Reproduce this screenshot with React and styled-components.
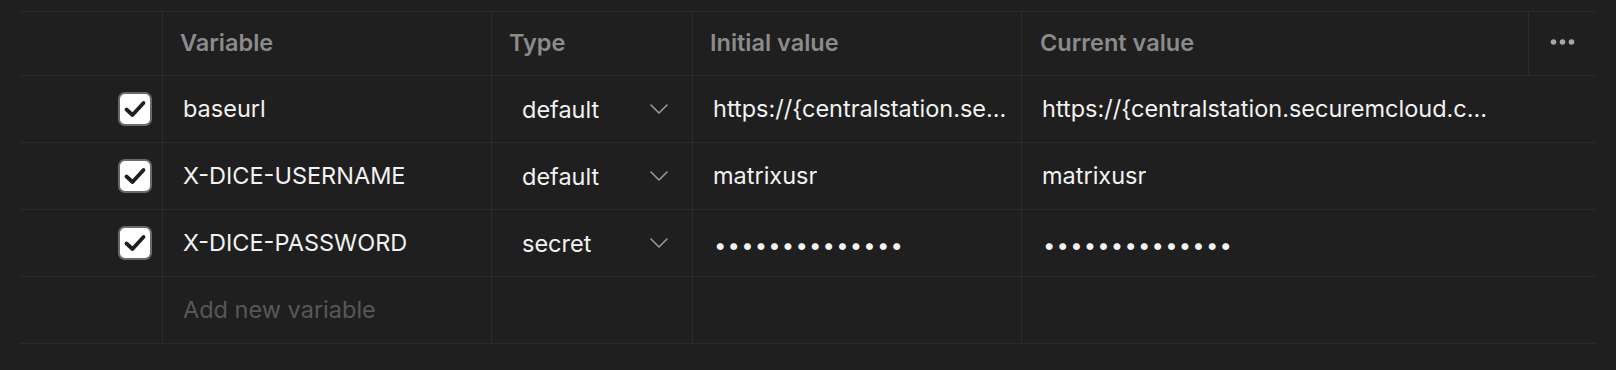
import React from "react";
import styled, { createGlobalStyle } from "styled-components";

const Global = createGlobalStyle`
  html, body { margin: 0; padding: 0; background: #1f1f1f; }
  body { font-family: Inter, "Noto Sans", sans-serif; -webkit-font-smoothing: antialiased; }
`;

const Page = styled.div`
  width: 1616px;
  height: 370px;
  box-sizing: border-box;
  padding: 11px 20px 0 20px;
  background: #1f1f1f;
`;

const Table = styled.div`
  width: 1576px;
  border-top: 1px solid #2b2b2b;
`;

const Row = styled.div`
  display: grid;
  grid-template-columns: ${(p) =>
    p.$header ? "143px 329px 201px 329px 507px 67px" : "143px 329px 201px 329px 574px"};
  height: ${(p) => (p.$header ? 63 : 66)}px;
  border-bottom: 1px solid #2b2b2b;
`;

const Cell = styled.div`
  display: flex;
  align-items: center;
  min-width: 0;
  box-sizing: border-box;
  padding: 0 ${(p) => p.$pr ?? 12}px ${(p) => p.$pb ?? 2}px ${(p) => p.$pl ?? 20}px;
  border-right: ${(p) => (p.$last ? "none" : "1px solid #2b2b2b")};
  justify-content: ${(p) => p.$justify || "flex-start"};
`;

const HeadText = styled.span`
  font-size: 23.5px;
  font-weight: 600;
  color: #8b8b8b;
  white-space: nowrap;
`;

const Text = styled.span`
  font-size: 23.5px;
  font-weight: 400;
  color: ${(p) => (p.$muted ? "#585858" : "#f2f2f2")};
  white-space: nowrap;
  overflow: hidden;
  text-overflow: ellipsis;
`;

const Dots = styled.span`
  font-size: 22px;
  color: #f4f4f4;
  letter-spacing: 1.2px;
  white-space: nowrap;
  padding: 6px 0 0 1px;
`;

const Box = styled.span`
  width: 34px;
  height: 34px;
  box-sizing: border-box;
  border-radius: 7px;
  border: 2px solid #6a6a6a;
  background: #ffffff;
  display: flex;
  align-items: center;
  justify-content: center;
`;

const SelectButton = styled.div`
  flex: 1;
  display: flex;
  align-items: center;
  justify-content: space-between;
  padding: 0 24px 0 10px;
  min-width: 0;
`;

const MoreButton = styled.div`
  display: flex;
  align-items: center;
  justify-content: center;
  width: 100%;
  height: 100%;
  box-sizing: border-box;
`;

const Check = () => (
  <Box>
    <svg width="24" height="20" viewBox="0 0 24 20">
      <path d="M3.5 10.5 L9.5 16 L20.5 4" fill="none" stroke="#1f1f1f" strokeWidth="3.8" strokeLinecap="round" strokeLinejoin="round" />
    </svg>
  </Box>
);

const Chevron = () => (
  <svg width="18" height="10" viewBox="0 0 18 10">
    <path d="M1 1 L9 9 L17 1" fill="none" stroke="#9a9a9a" strokeWidth="1.6" strokeLinecap="round" strokeLinejoin="round" />
  </svg>
);

const More = () => (
  <svg width="26" height="8" viewBox="0 0 26 8">
    <circle cx="3.5" cy="4" r="2.8" fill="#a6a6a6" />
    <circle cx="12.5" cy="4" r="2.8" fill="#a6a6a6" />
    <circle cx="21.5" cy="4" r="2.8" fill="#a6a6a6" />
  </svg>
);

const rows = [
  { name: "baseurl", type: "default", initial: "https://{centralstation.se...", current: "https://{centralstation.securemcloud.c..." },
  { name: "X-DICE-USERNAME", type: "default", initial: "matrixusr", current: "matrixusr" },
  { name: "X-DICE-PASSWORD", type: "secret", secret: true },
];

const DOTS = "\u2022".repeat(14);

export default function App() {
  return (
    <>
      <Global />
      <Page>
        <Table>
          <Row $header>
            <Cell $pb={0} />
            <Cell $pl={17} $pb={3}><HeadText>Variable</HeadText></Cell>
            <Cell $pl={17} $pb={3}><HeadText>Type</HeadText></Cell>
            <Cell $pl={17} $pb={3}><HeadText>Initial value</HeadText></Cell>
            <Cell $pl={18} $pb={3}><HeadText>Current value</HeadText></Cell>
            <Cell $last $pl={0} $pr={0} $pb={3}>
              <MoreButton><More /></MoreButton>
            </Cell>
          </Row>
          {rows.map((r) => (
            <Row key={r.name}>
              <Cell $justify="flex-end" $pr={10} $pb={0}><Check /></Cell>
              <Cell><Text>{r.name}</Text></Cell>
              <Cell $pl={20} $pr={0} $pb={0}>
                <SelectButton>
                  <Text>{r.type}</Text>
                  <Chevron />
                </SelectButton>
              </Cell>
              <Cell>{r.secret ? <Dots>{DOTS}</Dots> : <Text>{r.initial}</Text>}</Cell>
              <Cell $last>{r.secret ? <Dots>{DOTS}</Dots> : <Text>{r.current}</Text>}</Cell>
            </Row>
          ))}
          <Row>
            <Cell />
            <Cell><Text $muted>Add new variable</Text></Cell>
            <Cell />
            <Cell />
            <Cell $last />
          </Row>
        </Table>
      </Page>
    </>
  );
}
